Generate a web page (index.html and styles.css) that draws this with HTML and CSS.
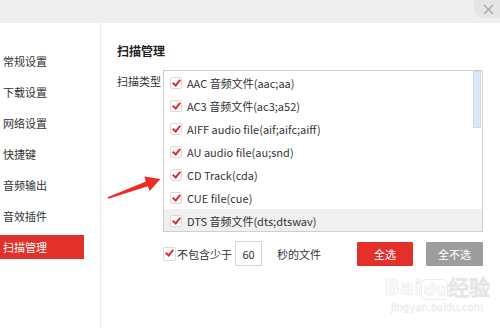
FILE: index.html
```html
<!DOCTYPE html>
<html lang="zh-CN">
<head>
    <meta charset="UTF-8">
    <meta name="viewport" content="width=device-width, initial-scale=1.0">
    <title>扫描管理</title>
    <link rel="stylesheet" href="styles.css">
</head>
<body>
    <div class="window">
        <div class="topbar">
            <div class="close-btn">
                <svg width="11" height="11" viewBox="0 0 11 11"><path d="M1 1L10 10M10 1L1 10" stroke="#a8a8a8" stroke-width="1.4" fill="none"/></svg>
            </div>
        </div>
        <div class="main">
            <ul class="sidebar">
                <li>常规设置</li>
                <li>下载设置</li>
                <li>网络设置</li>
                <li>快捷键</li>
                <li>音频输出</li>
                <li>音效插件</li>
                <li class="active">扫描管理</li>
            </ul>
            <div class="content">
                <h3>扫描管理</h3>
                <div class="scan-row">
                    <div class="scan-label">扫描类型</div>
                    <div class="type-list">
                        <div class="type-item"><span class="check"></span>AAC 音频文件(aac;aa)</div>
                        <div class="type-item"><span class="check"></span>AC3 音频文件(ac3;a52)</div>
                        <div class="type-item"><span class="check"></span>AIFF audio file(aif;aifc;aiff)</div>
                        <div class="type-item"><span class="check"></span>AU audio file(au;snd)</div>
                        <div class="type-item"><span class="check"></span>CD Track(cda)</div>
                        <div class="type-item"><span class="check"></span>CUE file(cue)</div>
                        <div class="type-item hover"><span class="check"></span>DTS 音频文件(dts;dtswav)</div>
                        <div class="scrollbar"></div>
                    </div>
                </div>
                <div class="bottom-row">
                    <span class="check plain"></span>
                    <span>不包含少于</span>
                    <div class="sec-input">60</div>
                    <span class="sec-text">秒的文件</span>
                    <button class="btn btn-all">全选</button>
                    <button class="btn btn-none">全不选</button>
                </div>
            </div>
        </div>

        <svg class="arrow" width="60" height="34" viewBox="0 0 60 34">
            <path d="M3.6 29.2L41.9 13.4L40.4 8.6L56.5 11L45.6 23L43.7 18.2L4.4 30.8Z" fill="#ee2a24"/>
        </svg>

        <div class="watermark">
            <div class="wm-logo">Bai<span class="wm-du">du</span>经验</div>
            <div class="wm-url">jingyan.baidu.com</div>
        </div>
    </div>
</body>
</html>
```

FILE: styles.css
```css
body {
    margin: 0;
    font-family: "Noto Sans CJK SC", "Open Sans", sans-serif;
    font-size: 11px;
    color: #333;
    background: #fff;
}
.window {
    position: relative;
    width: 500px;
    height: 328px;
    overflow: hidden;
}
.topbar {
    height: 23px;
    background-color: #efefef;
    display: flex;
    justify-content: flex-end;
}
.close-btn {
    width: 26px;
    height: 18px;
    background-color: #e5e5e5;
    border-bottom-left-radius: 10px;
    display: flex;
    align-items: center;
    justify-content: center;
    padding-left: 3px;
    box-sizing: border-box;
}
.main {
    display: flex;
    height: 305px;
}
.sidebar {
    list-style: none;
    margin: 0;
    padding: 26px 0 0 0;
    width: 100px;
    border-right: 1px solid #ececec;
}
.sidebar li {
    width: 84px;
    height: 24px;
    line-height: 24px;
    padding-left: 3px;
    box-sizing: border-box;
    margin-bottom: 7px;
    font-size: 11px;
    color: #333;
}
.sidebar li.active {
    background-color: #e2302a;
    color: #fff;
}
.content {
    flex: 1;
    padding: 18px 0 0 16px;
}
.content h3 {
    margin: 0 0 9px 0;
    height: 20px;
    line-height: 20px;
    font-size: 12px;
    font-weight: bold;
    color: #222;
}
.scan-row {
    display: flex;
}
.scan-label {
    width: 46px;
    line-height: 22px;
}
.type-list {
    position: relative;
    width: 320px;
    height: 162px;
    border: 1px solid #cfcfcf;
    box-sizing: border-box;
    overflow: hidden;
}
.type-item {
    display: flex;
    align-items: center;
    height: 23px;
    padding-left: 6px;
    color: #333;
}
.type-item.hover {
    background-color: #f0f0f0;
    height: 24px;
}
.check {
    position: relative;
    width: 12px;
    height: 12px;
    border: 1px solid #dadada;
    border-radius: 2px;
    box-sizing: border-box;
    background: #fff;
    margin-right: 5px;
    flex-shrink: 0;
}
.check::after {
    content: "";
    position: absolute;
    left: 3px;
    top: 0px;
    width: 3px;
    height: 6px;
    border-right: 2px solid #e02a2a;
    border-bottom: 2px solid #e02a2a;
    transform: rotate(40deg);
}
.scrollbar {
    position: absolute;
    right: 1px;
    top: 0;
    width: 8px;
    height: 57px;
    background-color: #dae9f5;
    border: 1px solid #c9dcec;
    box-sizing: border-box;
}
.bottom-row {
    display: flex;
    align-items: center;
    margin-top: 9px;
    margin-left: 46px;
    width: 320px;
    height: 25px;
}
.check.plain {
    width: 13px;
    height: 14px;
    margin-right: 1px;
}
.sec-input {
    width: 27px;
    height: 25px;
    line-height: 25px;
    margin-left: 3px;
    border: 1px solid #d6d6d6;
    box-sizing: border-box;
    text-align: center;
}
.sec-text {
    margin-left: 15px;
}
.btn {
    height: 24px;
    width: 56px;
    border: none;
    border-radius: 1px;
    font-family: inherit;
    font-size: 11px;
    color: #fff;
    padding: 0;
}
.btn-all {
    margin-left: auto;
    background-color: #e3302b;
}
.btn-none {
    margin-left: 13px;
    width: 57px;
    background-color: #9d9d9d;
}
.arrow {
    position: absolute;
    left: 104px;
    top: 168px;
}
.watermark {
    position: absolute;
    left: 384px;
    top: 276px;
    text-align: center;
    color: #fbfbfb;
    -webkit-text-stroke: 0.5px #e6e6e6;
    font-family: "DejaVu Sans", sans-serif;
}
.wm-logo {
    font-size: 21px;
    font-weight: bold;
    line-height: 24px;
}
.wm-du {
    border: 1px solid #ececec;
    border-radius: 5px;
    font-size: 16px;
    padding: 0 1px;
}
.wm-url {
    font-size: 10px;
    line-height: 12px;
    -webkit-text-stroke: 0.4px #e6e6e6;
}
```
